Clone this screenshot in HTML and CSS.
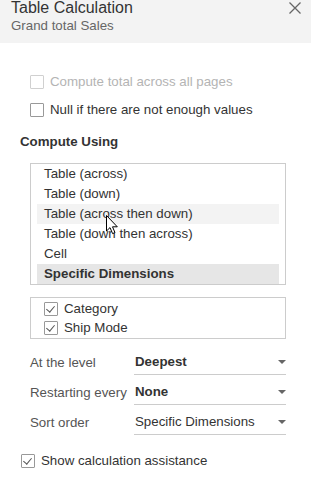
FILE: index.html
```html
<!DOCTYPE html>
<html lang="en">
<head>
    <meta charset="UTF-8">
    <meta name="viewport" content="width=device-width, initial-scale=1.0">
    <title>Table Calculation</title>
    <link rel="stylesheet" href="styles.css">
</head>
<body>
    <div class="panel">
        <div class="panel-head">
            <div class="head-text">
                <div class="title">Table Calculation</div>
                <div class="subtitle">Grand total Sales</div>
            </div>
            <svg class="close" width="12" height="12" viewBox="0 0 12 12">
                <path d="M0.5 0.5 L11.5 11.5 M11.5 0.5 L0.5 11.5" stroke="#666" stroke-width="1.3" fill="none"/>
            </svg>
        </div>

        <div class="panel-body">
            <label class="check-row indent disabled">
                <span class="box"></span>
                <span>Compute total across all pages</span>
            </label>
            <label class="check-row indent">
                <span class="box"></span>
                <span>Null if there are not enough values</span>
            </label>

            <h3 class="section">Compute Using</h3>

            <div class="listbox">
                <div class="item">Table (across)</div>
                <div class="item">Table (down)</div>
                <div class="item hover">Table (across then down)</div>
                <div class="item">Table (down then across)</div>
                <div class="item">Cell</div>
                <div class="item selected">Specific Dimensions</div>
                <svg class="cursor" width="13" height="20" viewBox="0 0 13 20">
                    <path d="M0.5 0.5 L0.5 16 L4 12.6 L6.6 18.6 L9 17.6 L6.5 11.8 L11.3 11.8 Z" fill="#fff" stroke="#000" stroke-width="1" stroke-linejoin="miter"/>
                </svg>
            </div>

            <div class="dim-box">
                <label class="check-row dim">
                    <span class="box checked"></span>
                    <span>Category</span>
                </label>
                <label class="check-row dim">
                    <span class="box checked"></span>
                    <span>Ship Mode</span>
                </label>
            </div>

            <div class="fields">
                <div class="field-row">
                    <span class="field-label">At the level</span>
                    <div class="select bold">Deepest<span class="arrow"></span></div>
                </div>
                <div class="field-row">
                    <span class="field-label">Restarting every</span>
                    <div class="select bold">None<span class="arrow"></span></div>
                </div>
                <div class="field-row">
                    <span class="field-label">Sort order</span>
                    <div class="select">Specific Dimensions<span class="arrow"></span></div>
                </div>
            </div>

            <label class="check-row assist">
                <span class="box checked"></span>
                <span>Show calculation assistance</span>
            </label>
        </div>
    </div>
</body>
</html>
```

FILE: styles.css
```css
body {
    margin: 0;
    padding: 0;
    background: #fff;
    font-family: "Liberation Sans", Arial, sans-serif;
    font-size: 13.3px;
    color: #333;
}
.panel {
    width: 311px;
    height: 492px;
    overflow: hidden;
}
.panel-head {
    height: 43px;
    background: #f3f3f3;
    display: flex;
    justify-content: space-between;
    padding: 0 10px 0 11px;
    box-sizing: border-box;
}
.title {
    font-size: 16px;
    line-height: 16px;
    color: #333;
}
.subtitle {
    font-size: 13.3px;
    line-height: 16px;
    margin-top: 2px;
    color: #666;
}
.close {
    margin-top: 2px;
}
.panel-body {
    padding: 29px 25px 0 20px;
}
.check-row {
    display: flex;
    align-items: center;
    gap: 6px;
    height: 20px;
    line-height: 20px;
}
.check-row.indent {
    margin-left: 10px;
    margin-bottom: 8px;
}
.check-row.disabled {
    color: #b4b4b4;
}
.box {
    width: 12px;
    height: 12px;
    border: 1px solid #999;
    border-radius: 1px;
    background: #fff;
    position: relative;
    flex: none;
}
.disabled .box {
    border-color: #d0d0d0;
}
.box.checked::after {
    content: "";
    position: absolute;
    left: 3px;
    top: 1px;
    width: 4px;
    height: 7px;
    border-right: 1.5px solid #555;
    border-bottom: 1.5px solid #555;
    transform: rotate(40deg);
}
.section {
    font-size: 13.3px;
    font-weight: bold;
    margin: 12px 0 0;
    line-height: 20px;
    color: #333;
}
.listbox {
    position: relative;
    margin: 11px 0 0 10px;
    border: 1px solid #ccc;
    padding: 0 6px;
}
.item {
    height: 20px;
    line-height: 20px;
    padding-left: 7px;
}
.item.hover {
    background: #f3f3f3;
}
.item.selected {
    background: #e6e6e6;
    font-weight: bold;
}
.cursor {
    position: absolute;
    left: 75px;
    top: 51px;
}
.dim-box {
    margin: 12px 0 0 10px;
    border: 1px solid #ccc;
    padding: 1px 0 0;
    height: 39px;
}
.check-row.dim {
    height: 19px;
    line-height: 19px;
    margin-left: 13px;
}
.fields {
    margin-top: 6px;
}
.field-row {
    display: flex;
    margin-left: 10px;
    height: 30px;
}
.field-label {
    width: 104px;
    flex: none;
    align-self: flex-end;
    line-height: 20px;
    padding-bottom: 2px;
    color: #555;
}
.select {
    flex: 1;
    display: flex;
    align-items: flex-end;
    justify-content: space-between;
    border-bottom: 1px solid #ccc;
    line-height: 20px;
    padding: 0 0 2px 1px;
    color: #333;
}
.select.bold {
    font-weight: bold;
}
.arrow {
    width: 0;
    height: 0;
    border-left: 4px solid transparent;
    border-right: 4px solid transparent;
    border-top: 4px solid #666;
    margin: 0 0 8px;
}
.check-row.assist {
    margin-top: 16px;
    margin-left: 1px;
}
```
